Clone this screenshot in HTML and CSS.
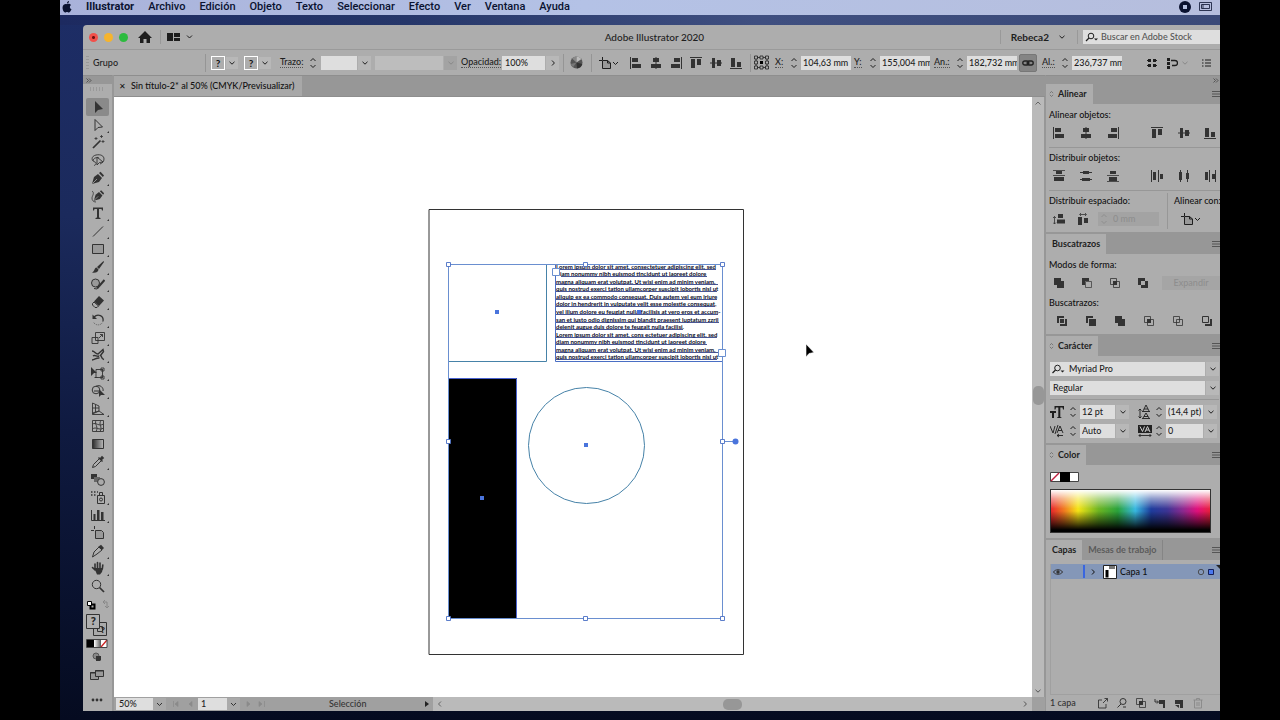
FILE: index.html
```html
<!DOCTYPE html>
<html lang="es">
<head>
<meta charset="utf-8">
<title>Adobe Illustrator 2020</title>
<link rel="stylesheet" href="styles.css">
</head>
<body>
<svg class="defs" aria-hidden="true">
  <defs>
    <linearGradient id="gr"><stop offset="0" stop-color="#2a2a2a"/><stop offset="1" stop-color="#bbb"/></linearGradient>
    <linearGradient id="gw"><stop offset="0" stop-color="#fff"/><stop offset="1" stop-color="#555"/></linearGradient>
  </defs>
  <symbol id="chev" viewBox="0 0 8 8"><path d="M1.500 2.800 4 5.200 6.500 2.800" fill="none" stroke="currentColor"/></symbol>
  <symbol id="right" viewBox="0 0 8 8"><path d="M3 1.500 5.400 4 3 6.500" fill="none" stroke="currentColor"/></symbol>
  <symbol id="dbl" viewBox="0 0 6 5"><path d="M.5.5 2.500 2.500.5 4.500M3 .5 5 2.500 3 4.500" fill="none" stroke="#444" stroke-width=".8"/></symbol>
  <symbol id="step" viewBox="0 0 8 12"><path d="M1.500 4 4 1.500 6.500 4M1.500 8 4 10.500 6.500 8" fill="none" stroke="currentColor"/></symbol>
  <symbol id="diamond" viewBox="0 0 6 8"><path d="M1 3 3 1 5 3M1 5 3 7 5 5" fill="none" stroke="#666" stroke-width=".9"/></symbol>
  <symbol id="burger" viewBox="0 0 8 8"><path d="M0 1.500H8M0 4H8M0 6.500H8" stroke="#444" stroke-width=".8"/></symbol>
  <symbol id="search" viewBox="0 0 14 10"><circle cx="6" cy="4" r="2.800" fill="none" stroke="currentColor"/><path d="M4 6 1 9" stroke="currentColor" stroke-width="1.200"/><path d="M9 6.500h4L11 8.500z" fill="currentColor"/></symbol>
  <symbol id="al-l" viewBox="0 0 12 12"><path d="M.5 0V12" stroke="currentColor"/><path d="M2 1h6v4H2zM2 7h9v4H2z" fill="currentColor"/></symbol>
  <symbol id="al-c" viewBox="0 0 12 12"><path d="M6 0V12" stroke="currentColor"/><path d="M3 1h6v4H3zM1 7h10v4H1z" fill="currentColor"/></symbol>
  <symbol id="al-r" viewBox="0 0 12 12"><path d="M11.500 0V12" stroke="currentColor"/><path d="M4 1h6v4H4zM1 7h9v4H1z" fill="currentColor"/></symbol>
  <symbol id="al-t" viewBox="0 0 12 12"><path d="M0 .5H12" stroke="currentColor"/><path d="M1 2h4v9H1zM7 2h4v6H7z" fill="currentColor"/></symbol>
  <symbol id="al-m" viewBox="0 0 12 12"><path d="M0 6H12" stroke="currentColor"/><path d="M2 1h3v10H2zM7 3h4v6H7z" fill="currentColor"/></symbol>
  <symbol id="al-b" viewBox="0 0 12 12"><path d="M0 11.500H12" stroke="currentColor"/><path d="M1 1h4v9H1zM7 5h4v5H7z" fill="currentColor"/></symbol>
  <symbol id="di-t" viewBox="0 0 12 12"><path d="M0 .5H12M0 5.500H12" stroke="currentColor" stroke-width=".8"/><path d="M3 1h6v3H3zM1 7h10v4H1z" fill="currentColor"/></symbol>
  <symbol id="di-m" viewBox="0 0 12 12"><path d="M0 2.500H12M0 9.500H12" stroke="currentColor"/><path d="M3 1h6v3H3zM2 8h8v3H2z" fill="currentColor"/></symbol>
  <symbol id="di-b" viewBox="0 0 12 12"><path d="M0 5.500H12M0 11.500H12" stroke="currentColor" stroke-width=".8"/><path d="M3 1h6v3H3zM2 7h8v4H2z" fill="currentColor"/></symbol>
  <symbol id="di-l" viewBox="0 0 12 12"><path d="M.5 0V12M7.500 0V12" stroke="currentColor"/><path d="M2 2h3v8H2zM9 4h3v5H9z" fill="currentColor"/></symbol>
  <symbol id="di-c" viewBox="0 0 12 12"><path d="M2.500 0V12M9.500 0V12" stroke="currentColor"/><path d="M1 2h3v8H1zM8 3h3v6H8z" fill="currentColor"/></symbol>
  <symbol id="di-r" viewBox="0 0 12 12"><path d="M5.500 0V12M11.500 0V12" stroke="currentColor"/><path d="M1 2h3v8H1zM8 4h3v5H8z" fill="currentColor"/></symbol>
  <symbol id="sp-v" viewBox="0 0 12 12"><path d="M1.500 3.500V11M0 5 1.500 3.500 3 5M0 9.500 1.500 11 3 9.500" stroke="currentColor" fill="none" stroke-width=".8"/><path d="M5 1h5v4H5zM4 6.500h8v4H4z" fill="currentColor"/></symbol>
  <symbol id="sp-h" viewBox="0 0 12 12"><path d="M3 1.500H9M4 0 2.500 1.500 4 3M8 0 9.500 1.500 8 3" stroke="currentColor" fill="none" stroke-width=".8"/><path d="M1 4h4v8H1zM7 5h4v5H7z" fill="currentColor"/></symbol>
  <symbol id="art" viewBox="0 0 20 12"><path d="M3.500 3.500H8.500L11.500 6V11.500H3.500z" fill="#999"/><path d="M3.500 0V3M0 3.500H3M3.500 3.500H8.500L11.500 6V11.500H3.500zM8.500 3.500V6H11.500" fill="none" stroke="currentColor"/><path d="M14 5 16.500 7.500 19 5" fill="none" stroke="currentColor"/></symbol>
  <symbol id="pf-1" viewBox="0 0 12 12"><path d="M1 1h7v3h3v7H4V8H1z" fill="currentColor"/></symbol>
  <symbol id="pf-2" viewBox="0 0 12 12"><path d="M1 1h7v3H4v4H1z" fill="currentColor"/><path d="M4.500 4.500h6v6h-6z" fill="none" stroke="currentColor" stroke-width=".7"/></symbol>
  <symbol id="pf-3" viewBox="0 0 12 12"><path d="M1.500 1.500h6v6h-6zM4.500 4.500h6v6h-6z" fill="none" stroke="currentColor" stroke-width=".8"/><path d="M4 4h4v4H4z" fill="currentColor"/></symbol>
  <symbol id="pf-4" viewBox="0 0 12 12"><path fill-rule="evenodd" d="M1 1h7v3h3v7H4V8H1zM4 4v4h4V4z" fill="currentColor"/></symbol>
  <symbol id="pf-5" viewBox="0 0 12 12"><path d="M1 1h7v2H3v5H1zM9 4h2v7H4V9h5zM4 4h4v4H4z" fill="currentColor"/></symbol>
  <symbol id="pf-6" viewBox="0 0 12 12"><path d="M1 1h7v2H3v5H1zM4 4h7v7H4z" fill="currentColor"/></symbol>
  <symbol id="pf-7" viewBox="0 0 12 12"><path d="M1.500 1.500h6v6h-6zM4.500 4.500h6v6h-6z" fill="none" stroke="currentColor" stroke-width=".8"/></symbol>
  <symbol id="pf-8" viewBox="0 0 12 12"><path d="M1.500 1.500h6v6h-6z" fill="none" stroke="currentColor"/><path d="M9 4h2v7H4V9h5z" fill="currentColor"/></symbol>
  <symbol id="pen" viewBox="0 0 14 14"><path d="M1 13 3 6 7 3 11 7 8 11z" fill="currentColor"/><path d="M8 2 9.500.8 13 4.500 11.800 6z" fill="currentColor"/><path d="M1.500 12.500 6 8" stroke="#aaa" stroke-width=".8"/></symbol>
</svg>

<div class="screen">
  <nav class="menubar" aria-label="Menú principal">
    <svg class="apple" viewBox="0 0 10 12"><path d="M5 3.200C6 2.600 8 2.500 9 4 7.200 5.200 7.500 7.500 9.500 8.300 8.800 10 7.800 11.500 6.800 11.500 6 11.500 5.800 11 5 11S4 11.500 3.200 11.500C1.500 11.300.3 8 .6 6 .9 3.200 3.500 2.400 5 3.200zM4.900 2.600C4.900 1.300 5.700.3 7 0 7.100 1.500 6.200 2.500 4.900 2.600z"/></svg>
    <a href="#" class="app">Illustrator</a><a href="#">Archivo</a><a href="#">Edición</a><a href="#">Objeto</a><a href="#">Texto</a><a href="#">Seleccionar</a><a href="#">Efecto</a><a href="#">Ver</a><a href="#">Ventana</a><a href="#">Ayuda</a>
    <svg class="rec" viewBox="0 0 12 12"><circle cx="6" cy="6" r="6"/><rect x="4" y="4" width="4" height="4" fill="#b4c0e0"/></svg>
    <svg class="disp" viewBox="0 0 13 10"><path d="M.5.500h12v8H.5zM2.500 2.500h8v4h-8zM4 2.500v4" fill="none" stroke="#0a1230" stroke-width=".8"/></svg>
  </nav>

  <div class="window">
    <header class="titlebar">
      <span class="lights"><i class="red"></i><i class="yellow"></i><i class="green"></i></span>
      <button class="home" aria-label="Inicio"><svg viewBox="0 0 14 12"><path d="M7 0 14 7H12V12H8.500V8h-3v4H2V7H0z" fill="currentColor"/></svg></button>
      <button class="layout" aria-label="Espacio de trabajo"><svg viewBox="0 0 26 10"><path d="M0 1h6v8H0zM7 1h6v4H7zM7 6h6v3H7z" fill="currentColor"/><path d="M20 3.500 22.500 6 25 3.500" fill="none" stroke="currentColor"/></svg></button>
      <h1>Adobe Illustrator 2020</h1>
      <button class="user">Rebeca2<svg viewBox="0 0 8 8"><use href="#chev"/></svg></button>
      <label class="stock"><svg viewBox="0 0 14 10"><use href="#search"/></svg><input type="search" placeholder="Buscar en Adobe Stock" aria-label="Buscar en Adobe Stock"></label>
    </header>

    <div class="control">
      <span class="grip"></span>
      <span>Grupo</span>
      <i class="sep"></i>
      <button class="swatch" aria-label="Relleno"><b>?</b><svg class="c" viewBox="0 0 8 8"><use href="#chev"/></svg></button>
      <button class="swatch" aria-label="Trazo"><b>?</b><svg class="c" viewBox="0 0 8 8"><use href="#chev"/></svg></button>
      <label for="trazo" class="dot">Trazo:</label>
      <button class="stepper" aria-label="Cambiar trazo"><svg><use href="#step"/></svg></button>
      <span class="combo w50"><input id="trazo"><button aria-label="Grosores"><svg><use href="#chev"/></svg></button></span>
      <span class="combo w82 off"><input aria-label="Perfil" disabled><button aria-label="Perfiles" disabled><svg><use href="#chev"/></svg></button></span>
      <label for="opac" class="dot">Opacidad:</label>
      <span class="combo w56"><input id="opac" value="100%"><button aria-label="Opacidades"><svg><use href="#right"/></svg></button></span>
      <i class="sep"></i>
      <button class="ic" aria-label="Volver a colorear"><svg width="13" height="13" viewBox="0 0 13 13"><circle cx="6.500" cy="6.500" r="6" fill="#555"/><path d="M6.500 6.500 2 2.500A6 6 0 0 1 6.500.5z" fill="#888"/><path d="M6.500 6.500V.5A6 6 0 0 1 11.500 3z" fill="#bbb"/><path d="M6.500 6.500 12.300 8A6 6 0 0 1 7 12.500z" fill="#333"/><path d="M6.500 6.500 .8 8A6 6 0 0 0 3 11.300z" fill="#777"/></svg></button>
      <i class="sep"></i>
      <button class="ic" aria-label="Alinear con"><svg width="20" height="12"><use href="#art"/></svg></button>
      <div class="aligns">
        <button aria-label="Izquierda"><svg><use href="#al-l"/></svg></button><button aria-label="Centro"><svg><use href="#al-c"/></svg></button><button aria-label="Derecha"><svg><use href="#al-r"/></svg></button><button aria-label="Superior"><svg><use href="#al-t"/></svg></button><button aria-label="Medio"><svg><use href="#al-m"/></svg></button><button aria-label="Inferior"><svg><use href="#al-b"/></svg></button>
      </div>
      <i class="sep mid"></i>
      <button class="ic" aria-label="Punto de referencia"><svg width="15" height="15" viewBox="0 0 15 15"><path d="M.5 1h3v3h-3zM6 1h3v3H6zM11.500 1h3v3h-3zM.5 6h3v3h-3zM11.500 6h3v3h-3zM.5 11h3v3h-3zM6 11h3v3H6zM11.500 11h3v3h-3zM3.500 2.500H6M9 2.500h2.500M3.500 12.500H6M9 12.500h2.500M2 4v2M13 4v2M2 9v2M13 9v2" fill="none" stroke="currentColor" stroke-width=".8"/><path d="M6 6h3v3H6z" fill="#000"/></svg></button>
      <label for="fx" class="dot">X:</label>
      <button class="stepper" aria-label="Cambiar X"><svg><use href="#step"/></svg></button>
      <input class="num" id="fx" value="104,63 mm">
      <label for="fy" class="dot">Y:</label>
      <button class="stepper" aria-label="Cambiar Y"><svg><use href="#step"/></svg></button>
      <input class="num" id="fy" value="155,004 mm">
      <label for="fw" class="dot">An.:</label>
      <button class="stepper" aria-label="Cambiar anchura"><svg><use href="#step"/></svg></button>
      <input class="num" id="fw" value="182,732 mm">
      <button class="link" aria-label="Restringir proporciones"><svg viewBox="0 0 12 6"><rect x=".8" y="1" width="6" height="4" rx="2" fill="none" stroke="#222" stroke-width="1.400"/><rect x="5.200" y="1" width="6" height="4" rx="2" fill="none" stroke="#222" stroke-width="1.400"/></svg></button>
      <label for="fh" class="dot">Al.:</label>
      <button class="stepper" aria-label="Cambiar altura"><svg><use href="#step"/></svg></button>
      <input class="num" id="fh" value="236,737 mm">
      <button class="ic end" aria-label="Aislar"><svg width="12" height="12" viewBox="0 0 12 12"><path d="M2 2h3v3H2zM7 2h3v3H7zM2 7h3v3H2zM7 7h3v3H7z" fill="currentColor"/><path d="M1 3.500h1M10 3.500h1M1 8.500h1M10 8.500h1" stroke="currentColor"/></svg></button>
      <button class="ic end" aria-label="Seleccionar similares"><svg width="12" height="12" viewBox="0 0 12 12"><path d="M1 1h3v3H1zM1 5h3v3H1zM1 9h3v3H1z" fill="currentColor"/><path d="M5 3.500H9a2 2 0 0 1 0 5H6" fill="none" stroke="currentColor" stroke-width="1.300"/></svg></button>
      <button class="ic pale" aria-label="Opciones"><svg width="8" height="8"><use href="#chev"/></svg></button>
      <button class="ic end" aria-label="Menú de control"><svg width="10" height="10" viewBox="0 0 10 10"><path d="M0 2h1.500M0 5h1.500M0 8h1.500M3 2h6M3 5h6M3 8h6" stroke="currentColor"/></svg></button>
    </div>

    <div class="work">
      <aside class="toolbar" aria-label="Herramientas">
        <div class="dblarrow"><svg><use href="#dbl"/></svg></div>
        <div class="tgrip"></div>
        <div class="tools">
          <button class="on" aria-label="Selección"><svg viewBox="0 0 14 14"><path d="M4 1V13L7 10 12 9z" fill="currentColor"/></svg></button>
          <button class="m" aria-label="Selección directa"><svg viewBox="0 0 14 14"><path d="M4 1.500V12.500L7 9.500 11.500 9z" fill="none" stroke="currentColor"/></svg></button>
          <button aria-label="Varita mágica"><svg viewBox="0 0 14 14"><path d="M2 13 9.500 5.500" stroke="currentColor" stroke-width="1.700"/><path d="M5 2v3M3.500 3.500h3M10.500 0v3M9 1.500h3M12 5v3M10.500 6.500h3" stroke="currentColor" stroke-width=".8"/></svg></button>
          <button aria-label="Lazo"><svg viewBox="0 0 14 14"><path d="M4 9C0 8 0 3 5 2S13 3 13 6 11 10 9 11M4 9C6 10 5 12 3 12.500M2 8C2 5 6 4 8 5M6 4V12L8.500 9.500 12 9z" fill="none" stroke="currentColor" stroke-width=".9"/></svg></button>
          <button class="m" aria-label="Pluma"><svg viewBox="0 0 14 14"><use href="#pen"/></svg></button>
          <button aria-label="Curvatura"><svg viewBox="0 0 14 14"><use href="#pen" x="2" y="0" width="12" height="13"/><path d="M1 2C4 4 1 7 1 9S2 13 5 13" fill="none" stroke="currentColor" stroke-width=".8"/></svg></button>
          <button class="m" aria-label="Texto"><svg viewBox="0 0 14 14"><path d="M2 1.500H12V4.500H11L10.500 3H8V11.500L9.500 12V13H4.500V12L6 11.500V3H3.500L3 4.500H2z" fill="currentColor"/></svg></button>
          <button class="m" aria-label="Segmento de línea"><svg viewBox="0 0 14 14"><path d="M2 12.500 12 2.500" stroke="currentColor"/></svg></button>
          <button class="m" aria-label="Rectángulo"><svg viewBox="0 0 14 14"><path d="M1.500 2.500h11v9h-11z" fill="#999" stroke="currentColor"/></svg></button>
          <button class="m" aria-label="Pincel"><svg viewBox="0 0 14 14"><path d="M12.500 1 6 7 8 9 13 2zM5.500 7.500C3 8 4 11 1 12.500 4 13.500 7.500 12 7.500 9.500z" fill="currentColor"/></svg></button>
          <button class="m" aria-label="Lápiz"><svg viewBox="0 0 14 14"><circle cx="4.500" cy="6" r="4" fill="#999" stroke="currentColor"/><path d="M6 11.500 13.500 3" stroke="currentColor" stroke-width="2"/><path d="M3 11.500 6 12" stroke="currentColor"/></svg></button>
          <button class="m" aria-label="Borrador"><svg viewBox="0 0 14 14"><path d="M8 1 13 5.500 8 11 3 6.500z" fill="currentColor"/><path d="M3 7 7.500 11 6 12.500H4L1.500 10V8.500z" fill="none" stroke="currentColor"/></svg></button>
          <button class="m" aria-label="Rotar"><svg viewBox="0 0 14 14"><path d="M3 4C7 0 13 3 12 8" fill="none" stroke="currentColor" stroke-width="1.300"/><path d="M12 8C11 13 4 13 2.500 9" fill="none" stroke="currentColor" stroke-width=".6" stroke-dasharray="1 1"/><path d="M1.500 1.500V6H6z" fill="currentColor"/></svg></button>
          <button class="m" aria-label="Escalar"><svg viewBox="0 0 14 14"><path d="M4.500 1.500h9v8h-9zM1 6.500h6v6H1zM8 7 11.500 3.500M9 3.500h2.500V6" fill="none" stroke="currentColor" stroke-width=".9"/></svg></button>
          <button class="m" aria-label="Anchura"><svg viewBox="0 0 14 14"><path d="M1 3C4 3 4 6 7 6L12 1.500 12.500 3.500 9.500 7.500C11 8 10 11 13 11.500M2 8C4 6.500 6 9 8 8M1 12C4 12 5 9.500 8.500 10" fill="none" stroke="currentColor" stroke-width="1.400"/></svg></button>
          <button class="m" aria-label="Transformación libre"><svg viewBox="0 0 14 14"><path d="M0 1V10L3 7 6 7z" fill="currentColor"/><path d="M5 3.500H12M4 11.500h8M5 3.500v8M11.500 3.500v8M3.500 11.500h3M10 2h3v3h-3zM10 10h3v3h-3z" fill="none" stroke="currentColor" stroke-width=".9"/></svg></button>
          <button class="m" aria-label="Creador de formas"><svg viewBox="0 0 14 14"><circle cx="5" cy="6" r="3.800" fill="none" stroke="currentColor"/><path d="M5 2.300C9 0 13 4 12 7M3 7H9" fill="none" stroke="currentColor"/><path d="M8 5V13L10 11H14z" fill="currentColor"/></svg></button>
          <button class="m" aria-label="Cuadrícula de perspectiva"><svg viewBox="0 0 14 14"><path d="M1.500 1V12.500H13M1.500 1 8 4V9L1.500 11M4.500 2.500V10M1.500 6H8M1.500 12 8 9 13 12.500" fill="none" stroke="currentColor" stroke-width=".9"/></svg></button>
          <button aria-label="Malla"><svg viewBox="0 0 14 14"><path d="M1.500 1.500h11v11h-11zM1.500 5C5 3 8 8 12.500 5M1.500 10C5 7 8 12 12.500 9M5 1.500C3 5 8 8 5 12.500M10 1.500C7 5 12 8 9 12.500" fill="none" stroke="currentColor" stroke-width=".9"/></svg></button>
          <button aria-label="Degradado"><svg viewBox="0 0 14 14"><path d="M1.500 2.500h11v9h-11z" fill="url(#gr)" stroke="currentColor"/></svg></button>
          <button class="m" aria-label="Cuentagotas"><svg viewBox="0 0 14 14"><path d="M8 4 2.500 9.500 1.500 12.500 4.500 11.500 10 6" fill="none" stroke="currentColor"/><path d="M7 3 8 2 9 3 11 .8 13.200 3 11 5 12 6 11 7z" fill="currentColor"/></svg></button>
          <button aria-label="Fusión"><svg viewBox="0 0 14 14"><path d="M0 1h6v5H0z" fill="currentColor"/><path d="M3 4h6v5H3z" fill="#666"/><circle cx="10" cy="9" r="3.400" fill="#aaa" stroke="currentColor"/></svg></button>
          <button class="m" aria-label="Rociar símbolos"><svg viewBox="0 0 14 14"><path d="M6.500 5.500h7v8h-7zM8.500 2.500h3v3h-3z" fill="none" stroke="currentColor"/><circle cx="10" cy="9.500" r="1.500" fill="none" stroke="currentColor"/><path d="M0 2h1.500M3 2h1.500M6 2h1M0 5h1.500M3 5h1.500" stroke="currentColor" stroke-width="1.500"/></svg></button>
          <button class="m" aria-label="Gráfica"><svg viewBox="0 0 14 14"><path d="M.5 2V12.500H14" fill="none" stroke="currentColor"/><path d="M2.500 6h2v6h-2zM6 2h2.500v10H6zM10 4h2.500v8H10z" fill="currentColor"/></svg></button>
          <button aria-label="Mesa de trabajo"><svg viewBox="0 0 14 14"><path d="M3.500 0V3M0 4.500H3M4.500 4.500h6l2 2v6h-8z" fill="#999" stroke="currentColor"/></svg></button>
          <button class="m" aria-label="Sector"><svg viewBox="0 0 14 14"><path d="M8 3 3 8 1.500 13 6 10 11 6z" fill="none" stroke="currentColor"/><path d="M7 3 10 .8 13 4 11 6z" fill="currentColor"/></svg></button>
          <button class="m" aria-label="Mano"><svg viewBox="0 0 14 14"><path d="M4 8V3M6.500 7V1.500M9 7V2M11.300 8 11.800 4M1.500 6.500 4 9" stroke="currentColor" stroke-width="1.600" stroke-linecap="round"/><path d="M3.200 7H12L11 11 9 13.500H6z" fill="currentColor"/></svg></button>
          <button aria-label="Zoom"><svg viewBox="0 0 14 14"><circle cx="5.500" cy="5.500" r="4.200" fill="none" stroke="currentColor"/><path d="M8.500 8.500 13 13" stroke="currentColor" stroke-width="1.700"/></svg></button>
        </div>
        <div class="inks">
          <svg width="28" height="12" viewBox="0 0 28 12"><path d="M5.500 5.500h4v4h-4z" fill="none" stroke="#000" stroke-width="2"/><path d="M2.500 2.500h4v4h-4z" fill="#fff" stroke="#000"/><path d="M18 3H22V9M20 1 18 3 20 5M20 7 22 9 24 7" fill="none" stroke="#888"/></svg>
          <svg width="28" height="24" viewBox="0 0 28 24"><path d="M8.500 9.500h13v13h-13zM12.500 13.500h5v5h-5z" fill="#aaa" stroke="#333"/><path d="M1.500 1.500h13v14h-13z" fill="#b0b0b0" stroke="#333"/><text x="6" y="12" class="q">?</text><text x="16" y="20" class="q small">?</text></svg>
          <svg width="28" height="9" viewBox="0 0 28 9"><path d="M2 1h7v7H2z"/><path d="M9 1h7v7h-7z" fill="url(#gw)"/><path d="M16 1h6v7h-6z" fill="#fff"/><path d="M16 8 22 1" stroke="#c22" stroke-width="1.300"/><path d="M1.500.5h20.500v8H1.500z" fill="none" stroke="#444"/></svg>
        </div>
        <button class="ic mode" aria-label="Modo de dibujo"><svg width="12" height="10" viewBox="0 0 12 10"><circle cx="5" cy="4" r="3" fill="#888" stroke="#555"/><path d="M5 4h5v4l-1 1H5z" fill="#333"/></svg></button>
        <button class="ic mode" aria-label="Modo de pantalla"><svg width="14" height="12" viewBox="0 0 14 12"><path d="M.5 3.500h8v7h-8z" fill="#999" stroke="#333"/><path d="M5.500 1.500h8v6h-8z" fill="#999" stroke="#333"/><path d="M5 2h9M0 4h5" stroke="#333"/></svg></button>
        <button class="ic dots" aria-label="Editar barra"><svg width="12" height="4" viewBox="0 0 12 4" fill="#333"><circle cx="2" cy="2" r="1.400"/><circle cx="6" cy="2" r="1.400"/><circle cx="10" cy="2" r="1.400"/></svg></button>
      </aside>

      <main class="doc">
        <div class="tabs"><div class="tab"><button aria-label="Cerrar">✕</button><span>Sin título-2* al 50% (CMYK/Previsualizar)</span></div></div>
        <div class="view">
          <div class="canvas">
            <svg class="artboard" width="330" height="450" viewBox="428 208 330 450">
              <path d="M429 209.500H743.500V654.500H429z" fill="#fff" stroke="#333"/>
              <path d="M449 378h68v241h-68z"/>
              <g class="lorem">
                <text x="556" y="269">Lorem ipsum dolor sit amet, consectetuer adipiscing elit, sed</text>
                <text x="560" y="276">iam nonummy nibh euismod tincidunt ut laoreet dolore</text>
                <text x="556" y="284">magna aliquam erat volutpat. Ut wisi enim ad minim veniam,</text>
                <text x="556" y="291">quis nostrud exerci tation ullamcorper suscipit lobortis nisl ut</text>
                <text x="556" y="299">aliquip ex ea commodo consequat. Duis autem vel eum iriure</text>
                <text x="556" y="306">dolor in hendrerit in vulputate velit esse molestie consequat,</text>
                <text x="556" y="314">vel illum dolore eu feugiat nulla facilisis at vero eros et accum-</text>
                <text x="556" y="322">san et iusto odio dignissim qui blandit praesent luptatum zzril</text>
                <text x="556" y="329">delenit augue duis dolore te feugait nulla facilisi.</text>
                <text x="556" y="337">Lorem ipsum dolor sit amet, cons ectetuer adipiscing elit, sed</text>
                <text x="556" y="344">diam nonummy nibh euismod tincidunt ut laoreet dolore</text>
                <text x="556" y="352">magna aliquam erat volutpat. Ut wisi enim ad minim veniam,</text>
                <text x="556" y="359">quis nostrud exerci tation ullamcorper suscipit lobortis nisl ut</text>
              </g>
              <g fill="none" stroke="#4a6fc4">
                <path d="M556 269.500H716M561 276.500H707M556 284.500H718M556 291.500H717M556 299.500H717M556 306.500H715M556 314.500H718M556 322.500H719M556 329.500H683M556 337.500H717M556 344.500H707M556 352.500H718M556 359.500H717" stroke="#1c2c78" stroke-width=".8"/>
                <path d="M448.500 264.500h98v97h-98z" stroke="#4682a8"/>
                <path d="M555.500 264.500h167v97h-167z"/>
                <path d="M448.500 378.500h68v240h-68z" stroke="#4a63d0"/>
                <circle cx="586.500" cy="445.500" r="58" stroke="#4682a8"/>
                <path d="M448.500 264.500h274v354h-274zM722 441.500h13" stroke="#6a8fd0"/>
              </g>
              <path d="M552.500 268.500h7v7h-7zM718.500 349.500h7v7h-7z" fill="#fff" stroke="#6a8fd0"/>
              <g fill="#fff" stroke="#4a6fc4" stroke-width=".9"><path d="M446.500 262.500h4v4h-4zM583.500 262.500h4v4h-4zM720.500 262.500h4v4h-4zM446.500 439.500h4v4h-4zM720.500 439.500h4v4h-4zM446.500 616.500h4v4h-4zM583.500 616.500h4v4h-4zM720.500 616.500h4v4h-4z"/></g>
              <path d="M495 310h4v4h-4zM637 310h4v4h-4zM584 443h4v4h-4zM480 496h4v4h-4z" fill="#4a74dc"/>
              <circle cx="735.500" cy="441.500" r="3" fill="#4a74dc"/>
            </svg>
            <svg class="cursor" width="12" height="16" viewBox="0 0 12 16"><path d="M1 1V14L4 10.500 9 9.500z" stroke="#fff" stroke-width=".6"/></svg>
          </div>
          <div class="vscroll"><svg width="8" height="8" viewBox="0 0 8 8"><path d="M1.500 5.500 4 3 6.500 5.500" fill="none" stroke="#666"/></svg><i class="vthumb"></i><svg width="8" height="8"><use href="#chev"/></svg></div>
        </div>
        <footer class="status">
          <select aria-label="Zoom" class="zoom"><option>50%</option></select>
          <button class="nav" aria-label="Primera"><svg width="24" height="8" viewBox="0 0 24 8"><path d="M3.500 1V7M22 1.500V6.500L19 4zM8 1.500V6.500L5 4z" fill="#8a8a8a" stroke="#8a8a8a" stroke-width=".7"/></svg></button>
          <select aria-label="Mesa" class="page"><option>1</option></select>
          <button class="nav" aria-label="Última"><svg width="24" height="8" viewBox="0 0 24 8"><path d="M3 1.500V6.500L6 4zM15 1.500V6.500L18 4zM20.500 1V7" fill="#8a8a8a" stroke="#8a8a8a" stroke-width=".7"/></svg></button>
          <span class="mode-name">Selección</span>
          <button class="play" aria-label="Mostrar"><svg width="6" height="8" viewBox="0 0 6 8"><path d="M1 1V7L5 4z" fill="#222"/></svg></button>
          <div class="hscroll"><svg width="8" height="8" viewBox="0 0 8 8"><path d="M5 1.500 2.500 4 5 6.500" fill="none" stroke="#666"/></svg><i class="hthumb"></i><svg width="8" height="8"><use href="#right"/></svg></div>
          <span class="corner"></span>
        </footer>
      </main>

      <aside class="panels">
        <div class="dblarrow r"><svg><use href="#dbl"/></svg></div>
        <section>
          <h2><span><svg class="d"><use href="#diamond"/></svg>Alinear</span><svg class="bg"><use href="#burger"/></svg></h2>
          <div class="body al">
            <p>Alinear objetos:</p>
            <div class="six"><svg><use href="#al-l"/></svg><svg><use href="#al-c"/></svg><svg><use href="#al-r"/></svg><svg><use href="#al-t"/></svg><svg><use href="#al-m"/></svg><svg><use href="#al-b"/></svg></div>
            <hr>
            <p>Distribuir objetos:</p>
            <div class="six"><svg><use href="#di-t"/></svg><svg><use href="#di-m"/></svg><svg><use href="#di-b"/></svg><svg><use href="#di-l"/></svg><svg><use href="#di-c"/></svg><svg><use href="#di-r"/></svg></div>
            <hr>
            <div class="two">
              <div><p>Distribuir espaciado:</p><div class="space"><svg><use href="#sp-v"/></svg><svg><use href="#sp-h"/></svg><label class="ghost"><svg class="st"><use href="#step"/></svg><input value="0 mm" disabled aria-label="Espaciado"></label></div></div>
              <div class="with"><p>Alinear con:</p><svg class="ar"><use href="#art"/></svg></div>
            </div>
          </div>
        </section>
        <section>
          <h2><span>Buscatrazos</span><svg class="bg"><use href="#burger"/></svg></h2>
          <div class="body pf">
            <p>Modos de forma:</p>
            <div class="modes"><svg><use href="#pf-1"/></svg><svg><use href="#pf-2"/></svg><svg><use href="#pf-3"/></svg><svg><use href="#pf-4"/></svg><button disabled>Expandir</button></div>
            <p class="gap">Buscatrazos:</p>
            <div class="paths"><svg><use href="#pf-5"/></svg><svg><use href="#pf-6"/></svg><svg><use href="#pf-1"/></svg><svg><use href="#pf-3"/></svg><svg><use href="#pf-7"/></svg><svg><use href="#pf-8"/></svg></div>
          </div>
        </section>
        <section>
          <h2><span><svg class="d"><use href="#diamond"/></svg>Carácter</span><svg class="bg"><use href="#burger"/></svg></h2>
          <div class="body ch">
            <label class="combo font"><svg class="mag" viewBox="0 0 14 10"><use href="#search"/></svg><input value="Myriad Pro" aria-label="Fuente"><button aria-label="Fuentes"><svg><use href="#chev"/></svg></button></label>
            <span class="combo font"><input value="Regular" aria-label="Estilo"><button aria-label="Estilos"><svg><use href="#chev"/></svg></button></span>
            <hr>
            <div class="row">
              <svg class="g" viewBox="0 0 14 12"><path d="M0 5H6V7H4V12H2V7H0z" fill="currentColor"/><path d="M4.500 0H14V3.500H13L12.500 1.500H10.300V11L11.500 11.500V12H7V11.500L8.300 11V1.500H6L5.500 3.500H4.500z" fill="currentColor"/></svg><svg class="st"><use href="#step"/></svg><span class="combo"><input value="12 pt" aria-label="Tamaño"><button aria-label="Tamaños"><svg><use href="#chev"/></svg></button></span>
              <svg class="g" viewBox="0 0 14 14"><path d="M2 4V13M.5 5.500 2 4 3.500 5.500M.5 11.500 2 13 3.500 11.500M5 6 8 0 11 6M6 4h4M5 13 8 8 11 13M6 11.500h4M4 6.500h8M4 13.500h8" fill="none" stroke="currentColor" stroke-width=".9"/></svg><svg class="st"><use href="#step"/></svg><span class="combo"><input value="(14,4 pt)" aria-label="Interlineado"><button aria-label="Interlineados"><svg><use href="#chev"/></svg></button></span>
            </div>
            <div class="row">
              <svg class="g" viewBox="0 0 14 12"><path d="M0 1 3 8 5 1M5 9 8 0M7 8 10 1 13 8M8 5.500h4M7 10.500h6M9 9 7 10.500 9 12" fill="none" stroke="currentColor" stroke-width=".9"/></svg><svg class="st"><use href="#step"/></svg><span class="combo"><input value="Auto" aria-label="Kerning"><button aria-label="Kernings"><svg><use href="#chev"/></svg></button></span>
              <svg class="g" viewBox="0 0 14 12"><path d="M0 0H14V8H0z" fill="#222"/><path d="M2 1.500 4.500 6.500 6.500 1.500M7 7 9.500 1.500 12 7M8 5h3" fill="none" stroke="#ccc"/><path d="M1 10.500H13M2.500 9 1 10.500 2.500 12M11.500 9 13 10.500 11.500 12" fill="none" stroke="#222" stroke-width=".9"/></svg><svg class="st"><use href="#step"/></svg><span class="combo"><input value="0" aria-label="Tracking"><button aria-label="Trackings"><svg><use href="#chev"/></svg></button></span>
            </div>
          </div>
        </section>
        <section>
          <h2><span><svg class="d"><use href="#diamond"/></svg>Color</span><svg class="bg"><use href="#burger"/></svg></h2>
          <div class="body co">
            <svg class="chips" width="29" height="10" viewBox="0 0 29 10"><path d="M.5.500h28v9H.5z" fill="#fff" stroke="#444"/><path d="M10 0h10v10H10z"/><path d="M1 9 9 1" stroke="#c02040" stroke-width="1.500"/></svg>
            <div class="spectrum"></div>
          </div>
        </section>
        <section class="layers">
          <h2><span>Capas</span><em>Mesas de trabajo</em><svg class="bg"><use href="#burger"/></svg></h2>
          <div class="list">
            <div class="layer">
              <svg class="eye" viewBox="0 0 10 8"><path d="M.5 4C2 1 8 1 9.500 4 8 7 2 7 .5 4z" fill="none" stroke="#333"/><circle cx="5" cy="4" r="1.700" fill="#333"/></svg>
              <i class="bar"></i>
              <svg class="s8"><use href="#right"/></svg>
              <svg class="thumb" viewBox="0 0 14 14"><path d="M.5.500h13v13H.5z" fill="#fff" stroke="#222"/><path d="M2.500 5h3v7.500h-3z"/><path d="M6 1h6v3H6z" fill="#777"/></svg>
              <span>Capa 1</span>
              <svg class="target" viewBox="0 0 24 14"><circle cx="5" cy="7" r="2.700" fill="none" stroke="#444" stroke-width=".9"/><path d="M12.500 4.500h5v5h-5z" fill="#4a78f0" stroke="#15205a"/><path d="M20 0h4v4z" fill="#222"/></svg>
            </div>
          </div>
          <div class="foot">
            <span>1 capa</span>
            <svg viewBox="0 0 12 12"><path d="M5 3H1.500V11H9V7M6 6 10.500 1.500M7.500 1.500h3v3" fill="none" stroke="currentColor" stroke-width=".9"/></svg>
            <svg viewBox="0 0 12 12"><circle cx="7" cy="4.500" r="3" fill="none" stroke="currentColor"/><path d="M5 7 1.500 10.500M7 10h3" stroke="currentColor"/></svg>
            <svg><use href="#pf-3"/></svg>
            <svg viewBox="0 0 12 12"><path d="M1 2V5H4M3 3.500 4.500 5 3 6.500" fill="none" stroke="currentColor"/><path d="M5 3h6v8H9V7H5z" fill="currentColor"/></svg>
            <svg viewBox="0 0 12 12"><path d="M2 3h8v8H7V7H2zM2 8 6 11V8z" fill="currentColor"/></svg>
            <svg class="trash" viewBox="0 0 12 12"><path d="M1.500 3h9M4.500 3V1.500h3V3M2.500 3v8h7V3M5 5v4M7 5v4" fill="none" stroke="currentColor" stroke-width=".9"/></svg>
          </div>
        </section>
      </aside>
    </div>
  </div>
</div>
</body>
</html>
```
FILE: styles.css
```css
* { box-sizing: border-box; }
body { margin: 0; background: #000; color: #1e1e1e; font: 500 9px/12px Lato, "Noto Sans", sans-serif; }
button, input, select { font: inherit; color: inherit; margin: 0; padding: 0; border: 0; background: none; border-radius: 0; min-width: 0; }
button { display: flex; align-items: center; justify-content: center; }
svg { display: block; flex: none; }
p, h1, h2 { margin: 0; }
hr { width: 100%; height: 1px; margin: 4px 0 2px; border: 0; background: #979797; }
.defs { position: absolute; width: 0; height: 0; }

.screen { display: flex; flex-direction: column; height: 100vh; min-height: 720px; margin: 0 60px; padding-bottom: 9px; background: linear-gradient(90deg, #1d2a60 0, #26376a 30%, #3f4f80 60%, #3b4a78 100%) top / 100% 25px no-repeat, linear-gradient(#1d2d66 0, #1b2a5c 30%, #0f1a40 60%, #050b20 100%); overflow: hidden; }
.menubar { display: flex; align-items: center; gap: 14px; height: 15px; padding: 0 8px 2px 2px; flex: none; background: linear-gradient(90deg, #a9b2da, #b4c2e6 45%, #b6bedd); color: #0a1230; font: 500 11px/13px Roboto, sans-serif; }
.menubar a { color: inherit; text-decoration: none; }
.menubar .app { font-weight: 700; }
.apple { width: 10px; height: 12px; fill: #0a1230; }
.rec { width: 12px; height: 12px; margin-left: auto; fill: #0a1230; }
.disp { width: 13px; height: 10px; margin-left: -6px; }

.window { display: flex; flex-direction: column; flex: 1; min-height: 0; margin: 10px 0 0 23px; background: #adadad; border-radius: 4px 0 0 0; overflow: hidden; }

.titlebar { display: flex; align-items: center; height: 25px; flex: none; border-bottom: 1px solid #9a9a9a; }
.lights { display: flex; gap: 6px; padding-left: 6px; }
.lights i { width: 9px; height: 9px; border-radius: 50%; }
.red { background: radial-gradient(circle, #6b1010 0 1px, #f2504a 2px); }
.yellow { background: #f6b42c; }
.green { background: #2dbb3f; }
.home { width: 14px; margin-left: 10px; }
.home svg { width: 14px; height: 12px; }
.layout { margin-left: 8px; padding-left: 6px; border-left: 1px solid #999; height: 14px; }
.layout svg { width: 26px; height: 10px; }
.titlebar h1 { flex: 1; padding-left: 116px; text-align: center; font-weight: 500; font-size: 10px; }
.user { height: 14px; gap: 9px; padding: 0 11px 0 10px; border-left: 1px solid #999; border-right: 1px solid #999; font-size: 10px; font-weight: 700; }
.user svg { width: 8px; height: 8px; }
.stock { display: flex; align-items: center; gap: 2px; width: 137px; height: 14px; margin-left: 5px; padding-left: 2px; background: #dedede; }
.stock svg { width: 14px; height: 10px; }
.stock input { flex: 1; font-size: 9px; line-height: 12px; }
.stock input::placeholder { color: #555; }

.control { display: grid; grid-template-columns: 10px 112px 6px 33px 36px 27px 14px 54px 86px 41px 61px 7px 21px 8px 27px 120px 8px 21px 13px 13px 53px 13px 13px 54px 20px 13px 52px 23px 17px 13px 70px 20px 16px 14px 1fr; align-items: center; height: 25px; flex: none; }
.grip { width: 3px; height: 14px; margin-left: 3px; background: repeating-linear-gradient(#999 0 1px, transparent 1px 3px); }
.sep { width: 1px; height: 18px; background: #959595; }
.mid { margin-left: 4px; }
.swatch { justify-content: flex-start; }
.swatch b { width: 14px; height: 14px; border: 1px solid #fff; line-height: 12px; color: #111; font-size: 10px; }
.swatch .c { width: 12px; height: 12px; padding: 2px; background: #b8b8b8; margin-left: 1px; }
.dot { justify-self: start; border-bottom: 1px dotted #555; line-height: 10px; white-space: nowrap; }
.stepper { justify-content: flex-start; padding-left: 2px; }
.stepper svg { width: 8px; height: 12px; }
.combo { display: flex; height: 14px; }
.combo input { flex: 1; background: #dedede; padding-left: 3px; width: 0; }
.combo button { width: 13px; margin-left: 1px; background: #b8b8b8; flex: none; }
.combo button svg { width: 8px; height: 8px; }
.w50 { width: 50px; }
.w82 { width: 82px; }
.w56 { width: 57px; }
.off input { background: #bdbdbd; }
.off button { color: #888; background: #a3a3a3; }
.ic { justify-self: start; }
.aligns { display: grid; grid-template-columns: repeat(6, 20px); }
.aligns svg, .six svg, .modes svg, .paths svg, .space svg { width: 12px; height: 12px; color: #333; }
.num { width: 50px; height: 14px; padding-left: 2px; background: #dedede; }
.link { width: 18px; height: 18px; background: #858585; border: 1px solid #777; border-radius: 2px; }
.link svg { width: 12px; height: 6px; }
.end { margin-left: 4px; }
.control .end:last-child { margin-left: 10px; }
.pale { color: #888; margin-left: 3px; }

.work { display: grid; grid-template-columns: 31px minmax(0, 1fr) 175px; flex: 1; min-height: 0; }
.dblarrow { display: flex; align-items: center; height: 9px; background: #979797; padding: 0 3px; border-top: 1px solid #8e8e8e; flex: none; }
.dblarrow svg { width: 6px; height: 5px; }
.dblarrow.r { justify-content: flex-end; padding-right: 1px; }

.toolbar { display: flex; flex-direction: column; border-right: 2px solid #979797; background: #adadad; }
.tgrip { width: 15px; height: 4px; margin: 3px 7px 7px; background: repeating-linear-gradient(90deg, #999 0 1px, transparent 1px 3px); }
.tools { display: grid; grid-template-columns: 23px; grid-auto-rows: 1fr; height: 497px; margin-left: 3px; flex: none; }
.tools button { color: #333; position: relative; }
.tools svg { width: 14px; height: 14px; }
.tools .on { background: #8a8a8a; border-radius: 2px; }
.tools .m::after { content: ""; position: absolute; right: 0; bottom: 1px; border: 1px solid #333; border-top-color: transparent; border-left-color: transparent; }
.inks { display: grid; margin: 4px 0 0 2px; gap: 2px; }
.inks .q { font: 700 10px "Open Sans", sans-serif; fill: #222; }
.inks .small { font-size: 8px; }
.mode { width: 28px; height: 18px; }
.toolbar .dots { width: 28px; margin-top: auto; height: 22px; }

.doc { display: flex; flex-direction: column; min-width: 0; }
.tabs { display: flex; height: 22px; background: #979797; flex: none; border-top: 1px solid #8e8e8e; border-bottom: 1px solid #8e8e8e; }
.tab { display: flex; align-items: center; gap: 5px; padding: 0 8px 0 4px; background: #a8a8a8; color: #111; }
.tab button { font-size: 8px; width: 8px; }
.view { display: flex; flex: 1; min-height: 0; }
.canvas { flex: 1; position: relative; background: #fff; overflow: hidden; }
.artboard { position: absolute; left: 314px; top: 111px; }
.lorem { font: 700 6px Lato, sans-serif; fill: #05071c; }
.cursor { position: absolute; left: 691px; top: 246px; }
.vscroll { display: flex; flex-direction: column; align-items: center; width: 13px; padding: 2px 0; background: #bababa; border-right: 1px solid #979797; color: #555; }
.vthumb { width: 11px; height: 19px; border-radius: 5px; background: #979797; margin: 279px 0 auto; }
.status { display: flex; align-items: center; height: 14px; flex: none; background: #a0a0a0; }
.status select { appearance: none; height: 12px; padding-left: 3px; background: url("data:image/svg+xml,%3Csvg xmlns='http://www.w3.org/2000/svg' width='13' height='12'%3E%3Cpath d='M0 0h13v12H0z' fill='%23aaa'/%3E%3Cpath d='M4 5l2.500 2.500L9 5' fill='none' stroke='%23333'/%3E%3C/svg%3E") right / 13px 12px no-repeat #dedede; }
.status .zoom { width: 50px; margin-left: 2px; }
.status .page { width: 42px; }
.nav { width: 32px; }
.mode-name { flex: none; width: 122px; margin-left: 57px; color: #333; }
.play { width: 12px; margin-left: -30px; }
.hscroll { display: flex; align-items: center; flex: 1; height: 14px; padding: 0 3px; background: #bababa; color: #555; }
.hthumb { width: 19px; height: 11px; border-radius: 5px; background: #979797; margin: 0 auto; }
.corner { width: 13px; }

.panels { display: flex; flex-direction: column; min-height: 0; border-left: 1px solid #979797; overflow: hidden; }
.panels section { border-bottom: 2px solid #979797; flex: none; }
.panels h2 { display: flex; align-items: center; height: 20px; background: #979797; font: 700 9px/20px Lato, sans-serif; }
.panels h2 span { display: flex; align-items: center; gap: 4px; height: 20px; padding: 0 6px 0 3px; background: #adadad; }
.panels h2 span:not(:has(svg)) { padding-left: 6px; }
.panels h2 em { font-style: normal; color: #5c5c5c; padding: 0 6px; border-right: 1px solid #858585; }
.d { width: 5px; height: 8px; }
.bg { width: 8px; height: 8px; margin-left: auto; }
.body p { height: 16px; line-height: 16px; font-weight: 500; color: #111; white-space: nowrap; }
.al, .pf { padding: 3px 0 3px 3px; }
.six { display: grid; grid-template-columns: 27px 27px 44px 27px 26px 12px; padding-left: 4px; align-items: center; height: 20px; }
.two { display: grid; grid-template-columns: 118px 1fr; }
.with { padding-left: 6px; border-left: 1px solid #979797; }
.ar { width: 20px; height: 12px; margin: 4px 0 0 7px; }
.space { display: flex; align-items: center; gap: 12px; height: 20px; padding-left: 4px; }
.ghost { display: flex; align-items: center; gap: 5px; width: 61px; height: 14px; margin-left: -3px; padding-left: 2px; background: #a3a3a3; color: #8e8e8e; }
.ghost input { width: 40px; }
svg.st, .ghost svg.st { width: 8px; height: 12px; color: inherit; }
.modes { display: grid; grid-template-columns: 28px 28px 28px 28px 1fr; align-items: center; height: 20px; padding-left: 4px; }
.modes button { height: 14px; margin-left: -3px; background: #a5a5a5; color: #8e8e8e; }
.gap { margin-top: 2px; }
.paths { display: grid; grid-template-columns: repeat(6, 29px); align-items: center; height: 20px; padding-left: 7px; overflow: hidden; }
.ch { display: flex; flex-direction: column; gap: 5px; padding: 6px 1px 5px 4px; }
.ch hr { margin: -1px 0 0; }
.font .mag { width: 16px; height: 14px; padding: 2px 0 2px 1px; background: #dedede; }
.row { display: grid; grid-template-columns: 16px 8px 49px 20px 8px 51px; column-gap: 3px; align-items: center; height: 14px; }
.row .combo input { padding-left: 2px; }
.g { width: 14px; height: 14px; }
.g:nth-of-type(3) { justify-self: end; }
.co { padding: 7px 9px 5px 4px; }
.spectrum { height: 44px; margin-top: 7px; border: 1px solid #333; background: linear-gradient(#fff 0, rgba(255, 255, 255, .5) 20%, transparent 45%, transparent 50%, rgba(0, 0, 0, .6) 78%, #000 95%), linear-gradient(90deg, #e8282c 0, #f07820 8%, #f4e416 17%, #6cb422 30%, #2aa23c 42%, #38b8e0 53%, #1e3c9c 63%, #3c3494 73%, #8c2a90 83%, #e0107c 92%, #e8203c 100%); }
.panels .layers { display: flex; flex-direction: column; flex: 1; border-bottom: 0; min-height: 0; }
.list { flex: 1; margin: 4px 0 0 4px; border: 1px solid #a0a0a0; border-width: 0 0 1px 1px; }
.layer { display: flex; align-items: center; height: 15px; background: #8497b8; color: #111; padding-left: 2px; }
.eye { width: 10px; height: 8px; }
.bar { width: 2px; height: 13px; margin: 0 4px 0 20px; background: #3a66e0; }
.s8 { width: 8px; height: 8px; }
.thumb { width: 14px; height: 14px; margin: 0 3px 0 6px; }
.target { width: 24px; height: 14px; margin-left: auto; }
.foot { display: flex; align-items: center; gap: 7px; height: 16px; padding-left: 4px; color: #333; }
.foot span { width: 40px; }
.foot svg { width: 12px; height: 12px; }
.foot .trash { color: #888; }
```
